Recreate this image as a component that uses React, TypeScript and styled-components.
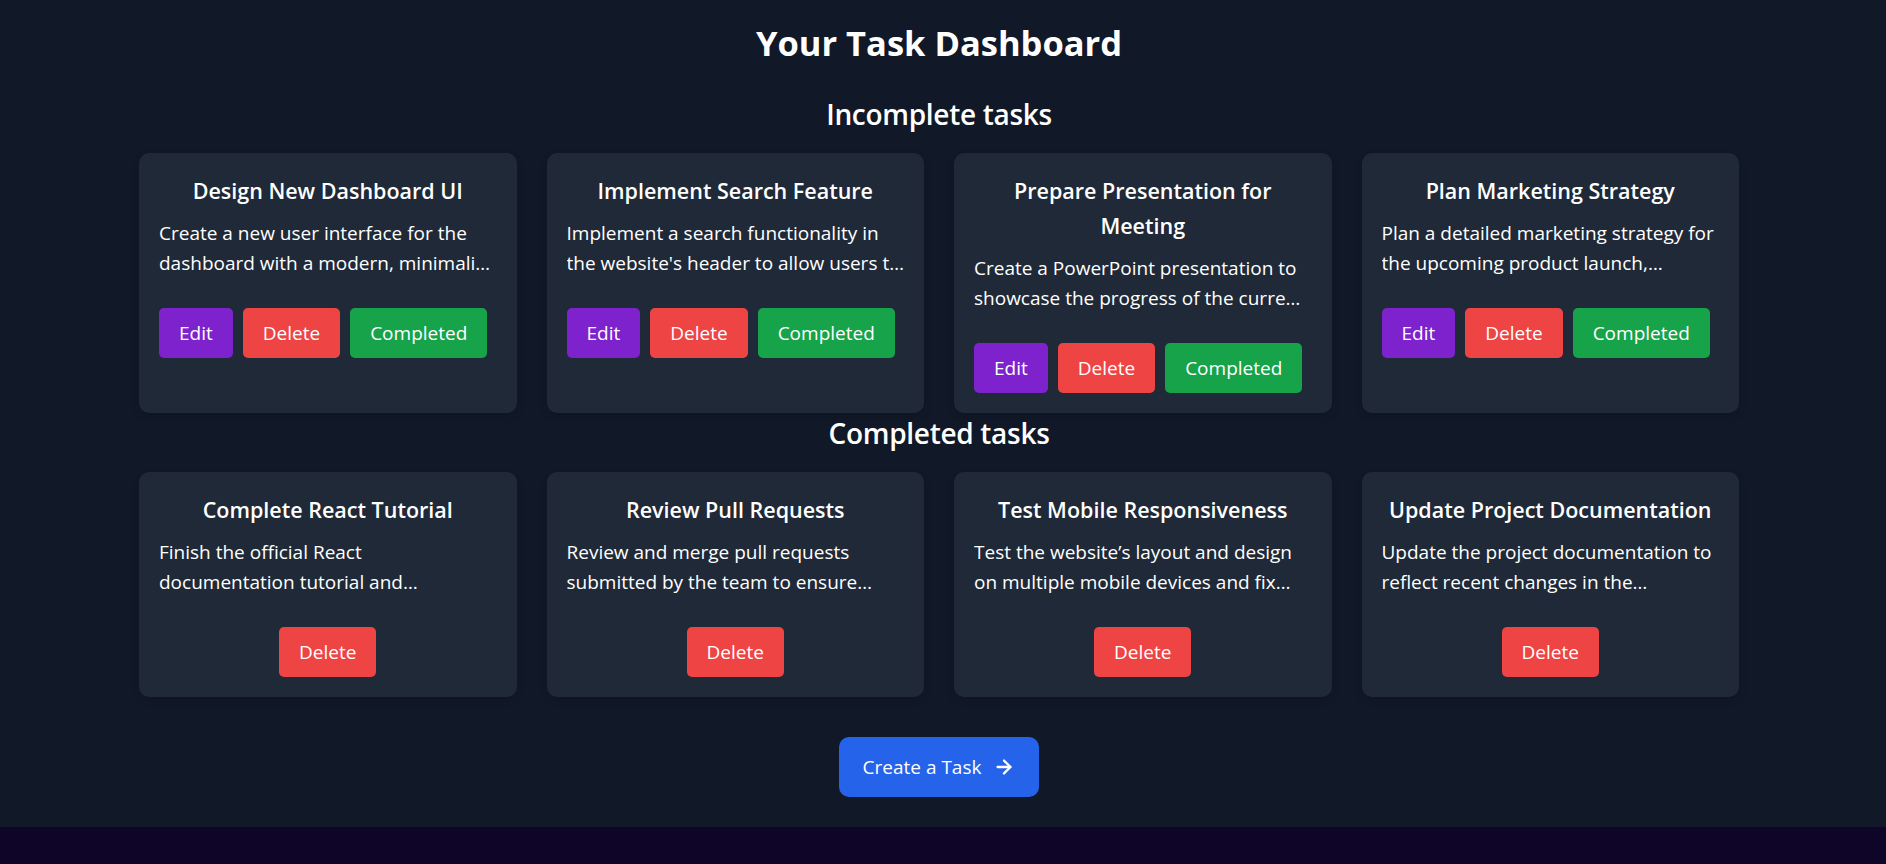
import styled, { createGlobalStyle } from "styled-components";
import { ArrowRight } from "lucide-react";

interface Task {
  title: string;
  desc: string;
}

const incompleteTasks: Task[] = [
  {
    title: "Design New Dashboard UI",
    desc: "Create a new user interface for the dashboard with a modern, minimalist design and improved navigation.",
  },
  {
    title: "Implement Search Feature",
    desc: "Implement a search functionality in the website's header to allow users to quickly find content.",
  },
  {
    title: "Prepare Presentation for Meeting",
    desc: "Create a PowerPoint presentation to showcase the progress of the current project to stakeholders.",
  },
  {
    title: "Plan Marketing Strategy",
    desc: "Plan a detailed marketing strategy for the upcoming product launch, including social media campaigns.",
  },
];

const completedTasks: Task[] = [
  {
    title: "Complete React Tutorial",
    desc: "Finish the official React documentation tutorial and understanding of hooks and state.",
  },
  {
    title: "Review Pull Requests",
    desc: "Review and merge pull requests submitted by the team to ensure code quality.",
  },
  {
    title: "Test Mobile Responsiveness",
    desc: "Test the website\u2019s layout and design on multiple mobile devices and fix any issues.",
  },
  {
    title: "Update Project Documentation",
    desc: "Update the project documentation to reflect recent changes in the codebase.",
  },
];

const GlobalStyle = createGlobalStyle`
  html, body {
    margin: 0;
    padding: 0;
    background: #111827;
  }
  body {
    font-family: "Open Sans", "Noto Sans", sans-serif;
    color: white;
  }
  * {
    box-sizing: border-box;
  }
`;

export default function App() {
  return (
    <>
      <GlobalStyle />
      <Page>
        <Heading>Your Task Dashboard</Heading>
        <SectionTitle>Incomplete tasks</SectionTitle>
        <CardGrid>
          {incompleteTasks.map((task) => (
            <TaskCard key={task.title}>
              <CardTitle>{task.title}</CardTitle>
              <CardDesc>{task.desc}</CardDesc>
              <ButtonRow>
                <ActionButton $variant="edit">Edit</ActionButton>
                <ActionButton $variant="delete">Delete</ActionButton>
                <ActionButton $variant="complete">Completed</ActionButton>
              </ButtonRow>
            </TaskCard>
          ))}
        </CardGrid>
        <SectionTitle>Completed tasks</SectionTitle>
        <CardGrid>
          {completedTasks.map((task) => (
            <TaskCard key={task.title}>
              <CardTitle>{task.title}</CardTitle>
              <CardDesc>{task.desc}</CardDesc>
              <ButtonRow $center>
                <ActionButton $variant="delete">Delete</ActionButton>
              </ButtonRow>
            </TaskCard>
          ))}
        </CardGrid>
        <CreateRow>
          <CreateButton>
            Create a Task
            <ArrowRight size={22} strokeWidth={2.5} />
          </CreateButton>
        </CreateRow>
      </Page>
      <Footer />
    </>
  );
}

const Page = styled.main`
  display: flex;
  flex-direction: column;
  align-items: center;
  padding: 20px 8px 30px 0;
`;

const Heading = styled.h1`
  margin: 0 0 29px;
  font-size: 34.5px;
  line-height: 45px;
  font-weight: 700;
`;

const SectionTitle = styled.h2`
  margin: 0 0 19px;
  font-size: 28px;
  line-height: 40px;
  font-weight: 600;
  letter-spacing: -0.3px;
`;

const CardGrid = styled.section`
  display: grid;
  grid-template-columns: repeat(4, 1fr);
  gap: 30px;
  width: 1600px;
`;

const TaskCard = styled.article`
  display: flex;
  flex-direction: column;
  padding: 20px;
  background: #1f2937;
  border-radius: 10px;
  box-shadow: 0 4px 8px rgba(0, 0, 0, 0.12);
`;

const CardTitle = styled.h3`
  margin: 0;
  text-align: center;
  font-size: 21.5px;
  line-height: 35px;
  font-weight: 600;
`;

const CardDesc = styled.p`
  margin: 10px 0 0;
  font-size: 19px;
  line-height: 30px;
  display: -webkit-box;
  -webkit-line-clamp: 2;
  -webkit-box-orient: vertical;
  overflow: hidden;
`;

const ButtonRow = styled.div<{ $center?: boolean }>`
  display: flex;
  gap: 10px;
  margin-top: 30px;
  justify-content: ${(p) => (p.$center ? "center" : "flex-start")};
`;

const buttonColors = {
  edit: "#7e22ce",
  delete: "#ef4444",
  complete: "#16a34a",
};

const ActionButton = styled.button<{ $variant: keyof typeof buttonColors }>`
  border: none;
  border-radius: 5px;
  padding: 10px 20px;
  font-family: inherit;
  font-size: 19px;
  line-height: 30px;
  color: white;
  background: ${(p) => buttonColors[p.$variant]};
  cursor: pointer;
`;

const CreateRow = styled.div`
  margin-top: 40px;
`;

const CreateButton = styled.button`
  display: flex;
  align-items: center;
  gap: 12px;
  height: 60px;
  padding: 0 24px 0 24px;
  border: none;
  border-radius: 10px;
  background: #2563eb;
  color: white;
  font-family: inherit;
  font-size: 19px;
  line-height: 30px;
  cursor: pointer;
`;

const Footer = styled.footer`
  height: 120px;
  background: #0f0529;
`;
